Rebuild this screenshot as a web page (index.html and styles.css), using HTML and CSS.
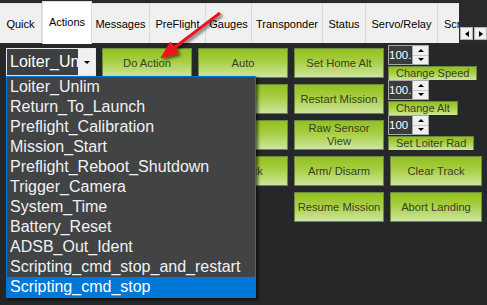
FILE: index.html
```html
<!DOCTYPE html>
<html lang="en">
<head>
    <meta charset="UTF-8">
    <meta name="viewport" content="width=device-width, initial-scale=1.0">
    <title>Actions</title>
    <link rel="stylesheet" href="styles.css">
</head>
<body>
    <div class="tabbar">
        <div class="tabs">
            <div class="tab">Quick</div>
            <div class="tab active">Actions</div>
            <div class="tab">Messages</div>
            <div class="tab">PreFlight</div>
            <div class="tab">Gauges</div>
            <div class="tab">Transponder</div>
            <div class="tab">Status</div>
            <div class="tab">Servo/Relay</div>
            <div class="tab last">Scripts</div>
        </div>
        <div class="tab-scroll">
            <span class="scroll-btn"><i class="tri left"></i></span>
            <span class="scroll-btn"><i class="tri right"></i></span>
        </div>
    </div>

    <div class="panel">
        <div class="actions">
            <div class="spin-stack">
                <div class="spin-group">
                    <div class="updown">
                        <span class="updown-value">100.</span>
                        <span class="updown-arrows"><span><i class="tri up"></i></span><span><i class="tri down"></i></span></span>
                    </div>
                    <button class="btn small">Change Speed</button>
                </div>
                <div class="spin-group">
                    <div class="updown">
                        <span class="updown-value">100.</span>
                        <span class="updown-arrows"><span><i class="tri up"></i></span><span><i class="tri down"></i></span></span>
                    </div>
                    <button class="btn small">Change Alt</button>
                </div>
                <div class="spin-group">
                    <div class="updown">
                        <span class="updown-value">100</span>
                        <span class="updown-arrows"><span><i class="tri up"></i></span><span><i class="tri down"></i></span></span>
                    </div>
                    <button class="btn small">Set Loiter Rad</button>
                </div>
            </div>

            <div class="combo">
                <span class="combo-value">Loiter_Unlim</span>
                <span class="combo-arrow"><i class="tri down"></i></span>
            </div>
            <button class="btn">Do Action</button>
            <button class="btn">Auto</button>
            <button class="btn">Set Home Alt</button>

            <div></div>
            <div></div>
            <button class="btn">Loiter</button>
            <button class="btn">Restart Mission</button>

            <div></div>
            <div></div>
            <button class="btn">RTL</button>
            <button class="btn">Raw Sensor View</button>

            <div></div>
            <div></div>
            <button class="btn">Joystick</button>
            <button class="btn">Arm/ Disarm</button>
            <button class="btn">Clear Track</button>

            <div></div>
            <div></div>
            <div></div>
            <button class="btn">Resume Mission</button>
            <button class="btn">Abort Landing</button>
        </div>

        <ul class="dropdown">
            <li>Loiter_Unlim</li>
            <li>Return_To_Launch</li>
            <li>Preflight_Calibration</li>
            <li>Mission_Start</li>
            <li>Preflight_Reboot_Shutdown</li>
            <li>Trigger_Camera</li>
            <li>System_Time</li>
            <li>Battery_Reset</li>
            <li>ADSB_Out_Ident</li>
            <li>Scripting_cmd_stop_and_restart</li>
            <li class="selected">Scripting_cmd_stop</li>
        </ul>
    </div>

    <svg class="pointer" width="80" height="65" viewBox="0 0 80 65">
        <defs>
            <filter id="shade" x="-30%" y="-30%" width="160%" height="160%">
                <feDropShadow dx="2" dy="2" stdDeviation="1.6" flood-color="#000" flood-opacity="0.55"/>
            </filter>
        </defs>
        <g filter="url(#shade)" fill="#e8141c" stroke="#e8141c">
            <line x1="70" y1="8" x2="24" y2="43" stroke-width="3"/>
            <polygon points="11,53 28.7,48.3 20.3,37.1" stroke-width="1" stroke-linejoin="round"/>
        </g>
    </svg>
</body>
</html>
```

FILE: styles.css
```css
*{
    box-sizing: border-box;
    padding: 0px;
    margin: 0px;
}

html{
    font-family: "Liberation Sans", Arial, sans-serif;
}

body{
    position: relative;
    width: 487px;
    height: 305px;
    overflow: hidden;
    background-color: #262729;
}

/* tab strip */
.tabbar{
    display: flex;
    height: 44px;
    background-color: #2a2a2b;
}

.tabs{
    display: grid;
    grid-template-columns: 42px 50px 58px 56px 46px 71px 43px 72px 1fr;
    align-items: end;
    width: 459px;
    height: 44px;
    padding-bottom: 1px;
    overflow: hidden;
}

.tab{
    display: flex;
    align-items: center;
    justify-content: center;
    height: 40px;
    padding-top: 1px;
    font-size: 11px;
    color: #000;
    white-space: nowrap;
    background-color: #f0f0f0;
    border-right: 1px solid #d9d9d9;
    border-top: 1px solid #e3e3e3;
}

.tab.active{
    height: 43px;
    margin-bottom: -1px;
    padding: 0 0 2px;
    background-color: #fff;
    border: 1px solid #dcdcdc;
    border-bottom: none;
}

.tab.last{
    justify-content: flex-start;
    padding-left: 6px;
    overflow: hidden;
    border-right: none;
}

.tab-scroll{
    display: flex;
    gap: 1px;
    padding: 27px 0 0 1px;
}

.scroll-btn{
    display: flex;
    align-items: center;
    justify-content: center;
    width: 13px;
    height: 13px;
    background-color: #f0f0f0;
    border: 1px solid #b4b4b4;
}

.tri{
    display: block;
    width: 0;
    height: 0;
    border: solid transparent;
}

.tri.left{
    border-width: 3px 4px 3px 0;
    border-right-color: #000;
}

.tri.right{
    border-width: 3px 0 3px 4px;
    border-left-color: #000;
}

.tri.up{
    border-width: 0 3px 3px 3px;
    border-bottom-color: #000;
}

.tri.down{
    border-width: 3px 3px 0 3px;
    border-top-color: #000;
}

/* action panel */
.panel{
    position: relative;
    height: 261px;
    padding: 4px 0 0 6px;
}

.actions{
    display: grid;
    grid-template-columns: 90px 90px 90px 90px 92px;
    grid-auto-rows: 30px;
    gap: 6px;
}

.btn{
    display: flex;
    align-items: center;
    justify-content: center;
    padding: 0 2px;
    font-family: inherit;
    font-size: 11.2px;
    line-height: 13px;
    text-align: center;
    color: #3b3f1f;
    background: linear-gradient(to bottom, #93c01e 0%, #a8cf45 45%, #cfe59d 100%);
    border: 1px solid #6c8a3b;
    white-space: normal;
}

.btn.small{
    height: 23px;
    padding: 0 7px;
    margin-top: 1px;
    font-size: 11px;
    white-space: nowrap;
}

.combo{
    display: flex;
    height: 28px;
    border: 1px solid #e8e8e8;
    background-color: #3e3f41;
}

.combo-value{
    flex: 1;
    overflow: hidden;
    padding: 3px 0 0 3px;
    font-size: 16px;
    line-height: 20px;
    color: #fff;
    white-space: nowrap;
}

.combo-arrow{
    display: flex;
    align-items: center;
    justify-content: center;
    width: 17px;
    background-color: #f0f0f0;
}

.spin-stack{
    grid-column: 5;
    grid-row: 1 / span 3;
    display: flex;
    flex-direction: column;
    margin: -3px 0 0 -2px;
}

.spin-group{
    display: flex;
    flex-direction: column;
    align-items: flex-start;
    height: 36px;
    overflow: hidden;
}

.updown{
    display: flex;
    width: 41px;
    height: 20px;
    flex-shrink: 0;
    border: 1px solid #a8a8a8;
    background-color: #3a3b3d;
}

.updown-value{
    flex: 1;
    font-size: 11.5px;
    line-height: 18px;
    color: #fff;
    white-space: nowrap;
    overflow: hidden;
}

.updown-arrows{
    display: flex;
    flex-direction: column;
    width: 16px;
    flex-shrink: 0;
    background-color: #f0f0f0;
    border-left: 1px solid #a8a8a8;
}

.updown-arrows span{
    display: flex;
    flex: 1;
    align-items: center;
    justify-content: center;
}

.updown-arrows span + span{
    border-top: 1px solid #c8c8c8;
}

/* open action list */
.dropdown{
    position: absolute;
    left: 6px;
    top: 32px;
    z-index: 2;
    width: 250px;
    height: 222px;
    list-style: none;
    background-color: #424345;
    border: 1px solid #0078d7;
    box-shadow: 2px 2px 3px rgba(0, 0, 0, 0.6);
    font-size: 16px;
    color: #f2f2f2;
}

.dropdown li{
    height: 20px;
    padding-left: 3px;
    line-height: 20px;
    white-space: nowrap;
}

.dropdown li.selected{
    background-color: #0078d7;
    color: #fff;
}

.pointer{
    position: absolute;
    left: 150px;
    top: 5px;
    z-index: 3;
    pointer-events: none;
}
```
